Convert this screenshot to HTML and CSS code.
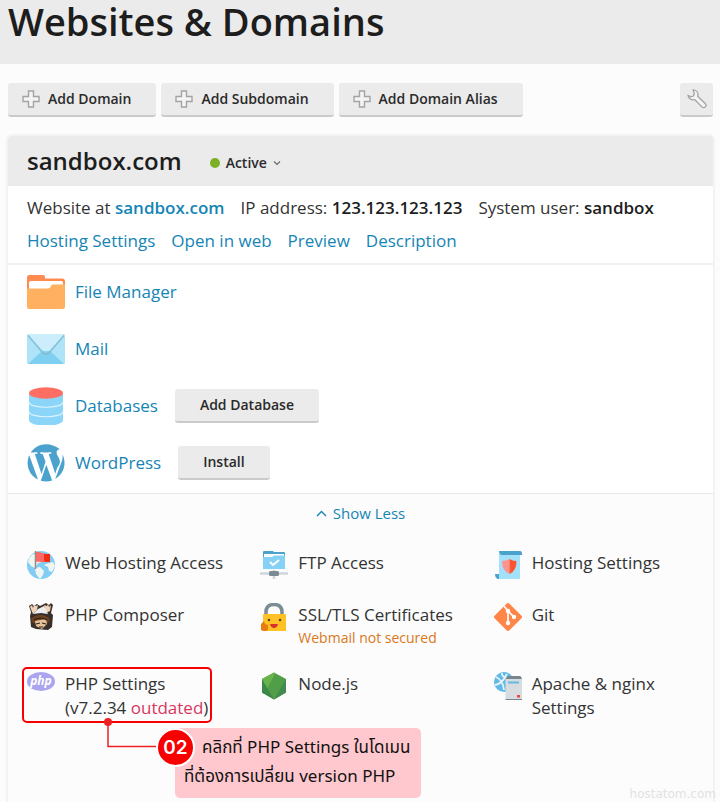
FILE: index.html
```html
<!DOCTYPE html>
<html lang="en">
<head>
<meta charset="utf-8">
<meta name="viewport" content="width=device-width, initial-scale=1">
<title>Websites &amp; Domains</title>
<link rel="stylesheet" href="styles.css">
</head>
<body>
<svg class="defs" aria-hidden="true">
  <symbol id="plus" viewBox="0 0 18 18"><path d="M6.5 1h5v5.500H17v5h-5.500V17h-5v-5.500H1v-5h5.500z" fill="#f4f4f4" stroke="#a3a3a3" stroke-width="1.400"/></symbol>
</svg>

<header class="page-head"><h1>Websites &amp; Domains</h1></header>

<main class="page">
  <div class="toolbar">
    <button class="btn btn-icon" type="button"><svg width="18" height="18" aria-hidden="true"><use href="#plus"/></svg>Add Domain</button>
    <button class="btn btn-icon" type="button"><svg width="18" height="18" aria-hidden="true"><use href="#plus"/></svg>Add Subdomain</button>
    <button class="btn btn-icon" type="button"><svg width="18" height="18" aria-hidden="true"><use href="#plus"/></svg>Add Domain Alias</button>
    <button class="btn btn-tool" type="button" aria-label="Settings"><svg width="20" height="20" viewBox="0 0 20 20" aria-hidden="true"><path d="M6 .8C8.800.800 11 2.800 11 5.500c0 .6-.1 1.200-.3 1.700l7.500 7.300c1 1 1 2.500.1 3.400-.9 1-2.500 1-3.400 0L7.600 10.500c-3 1-6-.8-6.700-4.300L3.800 7.800 6.500 7l.9-2.600z" fill="#f4f4f4" stroke="#a3a3a3" stroke-width="1.300" stroke-linejoin="round"/></svg></button>
  </div>

  <section class="panel">
    <div class="panel-head">
      <h2>sandbox.com</h2>
      <button class="status" type="button"><span class="dot"></span>Active<svg width="8" height="6" viewBox="0 0 8 6" aria-hidden="true"><path d="M1 1.500l3 3 3-3" fill="none" stroke="#666" stroke-width="1.100"/></svg></button>
    </div>

    <div class="summary">
      <div class="line">
        <span>Website at <a class="strong" href="#">sandbox.com</a></span>
        <span>IP address: <b>123.123.123.123</b></span>
        <span>System user: <b>sandbox</b></span>
      </div>
      <nav class="line">
        <a href="#">Hosting Settings</a>
        <a href="#">Open in web</a>
        <a href="#">Preview</a>
        <a href="#">Description</a>
      </nav>
    </div>

    <ul class="services">
      <li>
        <svg width="38" height="38" viewBox="0 0 38 38" aria-hidden="true"><path d="M0 4.500Q0 2 2 2h14q2 0 2 2v1.500h17q3 0 3 3V20H0z" fill="#ff8a50"/><path d="M2 9.500Q2 8 3.500 8h31Q36 8 36 9.500V18H2z" fill="#fff"/><path d="M0 15.500h21q2 0 2.700-2t2.300-2h12V34q0 2-2 2H2q-2 0-2-2z" fill="#ffb060"/></svg>
        <a href="#">File Manager</a>
      </li>
      <li>
        <svg width="38" height="38" viewBox="0 0 38 38" aria-hidden="true"><rect y="4" width="38" height="30" rx="1.500" fill="#aee3f8"/><path d="M1 34L15 21h8l14 13z" fill="#7fd0f0"/><path d="M1 4.500L15.500 21.500q3.500 3.500 7 0L37 4.500v2L22.500 23.500q-3.500 3-7 0L1 6.500z" fill="#82bcd0"/><path d="M1 4h36L22.500 20q-3.500 2.500-7 0z" fill="#cceefc"/></svg>
        <a href="#">Mail</a>
      </li>
      <li>
        <svg width="38" height="38" viewBox="0 0 38 38" aria-hidden="true"><path d="M2 6v27c0 7.500 34 7.500 34 0V6z" fill="#8bd5f8"/><path d="M2 15c0 7 34 7 34 0M2 24.500c0 7 34 7 34 0" fill="none" stroke="#dcf4fe" stroke-width="1.200"/><ellipse cx="19" cy="6" rx="17" ry="5.700" fill="#ff6e62"/></svg>
        <a href="#">Databases</a>
        <button class="btn" type="button">Add Database</button>
      </li>
      <li>
        <svg width="38" height="38" viewBox="0 0 122.500 122.500" fill="#4ba3cd" aria-hidden="true"><path d="M2 61.300c0 24 13.600 44 33.500 53.500L7.200 36.500C3.800 44 2 52.400 2 61.300zM106 58c0-7.300-2.600-12.400-4.900-16.300-3-4.900-5.800-9-5.800-13.900 0-5.400 4.100-10.500 9.900-10.500h1C94.500 7.500 78.600 1 61.300 1 41 1 22.500 12 12 27.500h3.800c6.200 0 15.800-.8 15.800-.8 3.200-.2 3.600 4.500.4 4.900 0 0-3.200.4-6.800.6l21.600 64.200 13-38.900-9.200-25.300c-3.200-.2-6.300-.6-6.300-.6-3.200-.2-2.800-5.100.4-4.900 0 0 9.800.8 15.700.8 6.200 0 15.800-.8 15.800-.8 3.200-.2 3.600 4.500.4 4.900 0 0-3.200.4-6.800.6l21.400 63.700 6.100-19.700C103.600 68.900 106 63.400 106 58zM62.300 66.500L44.500 118.200c5.300 1.600 11 2.500 16.800 2.500 6.900 0 13.600-1.200 19.800-3.400zM114.500 33c.2 1.900.4 3.900.4 6.100 0 6-1.100 12.800-4.500 21.200L91 112.500c18-10.500 30-29.500 30-51.200 0-10.300-2.400-20-6.500-28.300z"/></svg>
        <a href="#">WordPress</a>
        <button class="btn" type="button">Install</button>
      </li>
    </ul>

    <div class="more">
      <button class="toggle" type="button"><svg width="11" height="7" viewBox="0 0 11 7" aria-hidden="true"><path d="M1 6l4.500-4.500L10 6" fill="none" stroke="#1585b5" stroke-width="1.400"/></svg>Show Less</button>

      <ul class="tools">
        <li>
          <svg width="28" height="28" viewBox="0 0 28 28" aria-hidden="true"><circle cx="14" cy="14" r="14" fill="#82cdf3"/><path d="M2 7l4-4 7 1 3 7-5 1-3 5-4-2-3-4zM8 17l5-1 4 4-1 4-3 4-4-5zM19 13l7-2 2 4-3 6-3-1-1-4-4-2z" fill="#f0f5f2"/><path d="M9 1c4-1 5 2 9 1v9c-4 1-5-1-9 0z" fill="#ff6868"/><path d="M17 3h6v8h-5l-1-2z" fill="#f52a12"/><path d="M8.500 0v18" stroke="#9b8880" stroke-width="1.500"/></svg>
          <span>Web Hosting Access</span>
        </li>
        <li>
          <svg width="28" height="28" viewBox="0 0 28 28" aria-hidden="true"><path d="M3 1q0-1 1-1h9l1 1h10q1 0 1 1v10H3z" fill="#4ba3cd"/><path d="M4 3h20v4H4z" fill="#fff"/><path d="M3 6h9l2-1.500h11V18H3z" fill="#86d2f7"/><path d="M10 11l3 3 6-5" fill="none" stroke="#fff" stroke-width="2"/><path d="M0 22.500h28M14 19v9" stroke="#ced6da" stroke-width="2.500"/><rect x="9" y="20" width="10" height="5" rx="1.500" fill="#7b8b93"/></svg>
          <span>FTP Access</span>
        </li>
        <li>
          <svg width="28" height="28" viewBox="0 0 28 28" aria-hidden="true"><path d="M5 3h21v25H3q2-1 2-4z" fill="#a3e1fa"/><path d="M5 0h21q2 0 2 2v2H8Q5 4 5 0zM1 23h4v5q-4 0-4-5z" fill="#4ba3cd"/><path d="M8 10q4 0 7.500-2v15Q8 20 8 10z" fill="#ff938c"/><path d="M15.500 8q3 2 7 2 0 10-7 13z" fill="#fc5530"/></svg>
          <span>Hosting Settings</span>
        </li>
        <li>
          <svg width="28" height="28" viewBox="0 0 28 28" aria-hidden="true"><path d="M4 9L2 3l3-2 2 2 3-2 3 2 6-3 3 2 2-2 2 2-2 8 2 2-1 12-4 3-12-1-5-2-1-11z" fill="#39302c"/><path d="M3 4l2-2 1 3 1-3 2 1 2-1-1 5-4 4zM17 2l3 1 1-2 1 3 2-2-1 6-4 2z" fill="#efd3b4"/><path d="M6 11l5-5 6-3 4 8-7-1z" fill="#eeeef0"/><path d="M4 16q9-8 19 0l-2 4H6z" fill="#70431f"/><path d="M8 18l11-2 1 5-5 5-6-3z" fill="#e6c29a"/><path d="M7 17q6-4 13 0M9 21l4-1M15 20l4 1M12 24h4" fill="none" stroke="#29221f" stroke-width="1.200"/></svg>
          <span>PHP Composer</span>
        </li>
        <li>
          <svg width="28" height="28" viewBox="0 0 28 28" aria-hidden="true"><path d="M6 13V9q0-7.500 8-7.500T22 9v4" fill="none" stroke="#7c8c95" stroke-width="3.500"/><rect x="3" y="11" width="23" height="17.500" rx="1" fill="#ffc124"/><path d="M10 21h8q-1 4-4 4t-4-4z" fill="#d8312b"/><circle cx="9" cy="17" r="1.300" fill="#584329"/><circle cx="20" cy="17" r="1.300" fill="#584329"/><path d="M1 21l3-3 1 3 3 1v5q-4 2-7 0z" fill="#e67c10"/></svg>
          <span>SSL/TLS Certificates<small>Webmail not secured</small></span>
        </li>
        <li>
          <svg width="28" height="28" viewBox="0 0 28 28" aria-hidden="true"><path d="M12.500.700q1.500-1.400 3 0l12 12q1.200 1.300 0 2.600l-12 12q-1.500 1.400-3 0l-12-12q-1.200-1.300 0-2.600z" fill="#ff8648"/><path d="M10 3l4 5v13M14 8l7 7" fill="none" stroke="#fff" stroke-width="1.700"/><circle cx="14" cy="8" r="2.200" fill="#fff"/><circle cx="14" cy="20" r="2.200" fill="#fff"/><circle cx="20" cy="14" r="2.200" fill="#fff"/></svg>
          <span>Git</span>
        </li>
        <li class="marked">
          <svg width="28" height="20" viewBox="0 0 28 20" aria-hidden="true"><ellipse cx="14" cy="9.500" rx="14" ry="9.500" fill="#aaa5ee"/><text x="14" y="13" text-anchor="middle" class="php">php</text></svg>
          <span>PHP Settings<br>(v7.2.34 <em>outdated</em>)</span>
          <div class="frame"></div>
          <svg class="leader" width="52" height="32" viewBox="0 0 52 32" aria-hidden="true"><path d="M4 4v24.500h48" fill="none" stroke="#ed2024" stroke-width="1.500"/><circle cx="4" cy="4" r="4" fill="#ed2024"/></svg>
          <div class="note" lang="th"><b class="step">02</b><p>คลิกที่ PHP Settings ในโดเมน</p><p>ที่ต้องการเปลี่ยน version PHP</p></div>
        </li>
        <li>
          <svg width="28" height="28" viewBox="0 0 28 28" aria-hidden="true"><path d="M14 .5L26 7v13.500L14 27.500 2 20.500V7z" fill="#509f48"/><path d="M14 .5L2 7v13.500L4 22 15 2z" fill="#69b34d"/><path d="M2 7l12 20.500L2 20.500z" fill="#3d8848"/><path d="M26 7L14 27.500l12-7z" fill="#438a50"/></svg>
          <span>Node.js</span>
        </li>
        <li>
          <svg width="28" height="28" viewBox="0 0 28 28" aria-hidden="true"><circle cx="10" cy="10" r="10" fill="#61b9e5"/><path d="M2 5q7 3 8 13M8 1q-1 5 10 6M1 13q7-1 12-11" fill="none" stroke="#e6f5fb" stroke-width="1.800"/><rect x="11.500" y="5" width="16.500" height="23" rx="1" fill="#d6dce0"/><path d="M11.500 7l2-3h13l1.500 3zM11.500 27h16.500v1.500H11.500z" fill="#77868f"/><path d="M14 10.500h11" stroke="#64b9e3" stroke-width="2"/><rect x="23" y="23" width="3" height="2.500" fill="#f14632"/></svg>
          <span>Apache &amp; nginx Settings</span>
        </li>
      </ul>
      <footer class="mark">hostatom.com</footer>
    </div>
  </section>
</main>
</body>
</html>
```
FILE: styles.css
```css
* { box-sizing: border-box; }

body {
  margin: 0;
  min-height: 100vh;
  display: flex;
  flex-direction: column;
  background: #fcfcfc;
  color: #333;
  font: 17px/24px "Open Sans", "Noto Sans", sans-serif;
}

h1, h2, p, ul { margin: 0; padding: 0; }
ul { list-style: none; }
svg { flex: none; display: block; }
.defs { position: absolute; width: 0; height: 0; }

a { color: #1585b5; text-decoration: none; }
button { font-family: inherit; cursor: pointer; }
b, .strong { font-weight: 600; }
b { color: #1d1d1d; }

.page-head { background: #ebebeb; padding: 0 8px 22px; }
h1 { font-size: 38px; line-height: 42px; font-weight: 600; color: #1d1d1d; }

.page {
  flex: 1;
  display: flex;
  flex-direction: column;
  gap: 19px;
  padding: 19px 7px 0 8px;
}

.toolbar { display: flex; gap: 5px; }

.btn {
  height: 34px;
  padding: 0 25px;
  border: 0;
  border-bottom: 2px solid #cbcbcb;
  border-radius: 3px;
  background: #ebebeb;
  color: #2a2a2a;
  font-size: 14px;
  line-height: 20px;
  font-weight: 600;
}
.btn-icon { display: flex; align-items: center; gap: 8px; padding-left: 14px; }
.btn-tool { display: grid; place-items: center; width: 33px; padding: 0; margin-left: auto; }

.panel {
  flex: 1;
  display: flex;
  flex-direction: column;
  border-radius: 4px 4px 0 0;
  background: #fff;
  box-shadow: 0 0 0 2px #f3f3f3;
}

.panel-head {
  display: flex;
  align-items: center;
  gap: 28px;
  height: 50px;
  padding: 0 19px;
  border-radius: 4px 4px 0 0;
  background: #ebebeb;
}
h2 { font-size: 24px; line-height: 32px; font-weight: 600; color: #1d1d1d; }

.status {
  display: flex;
  align-items: center;
  gap: 6px;
  padding: 4px 0 0;
  border: 0;
  background: none;
  color: #2a2a2a;
  font-size: 14px;
  line-height: 20px;
  font-weight: 600;
}
.dot { width: 10px; height: 10px; border-radius: 50%; background: #7bb026; }

.summary {
  display: grid;
  gap: 9px;
  padding: 10px 19px;
  border-bottom: 2px solid #f1f1f1;
}
.line { display: flex; flex-wrap: wrap; column-gap: 16px; }

.services { display: grid; gap: 19px; padding: 8px 19px 11px; }
.services li { display: flex; align-items: center; }
.services a { margin: 0 17px 0 10px; }

.more {
  flex: 1;
  display: flex;
  flex-direction: column;
  padding: 9px 0 0 19px;
  border-top: 1px solid #e9e9e9;
  background: #fcfcfc;
}

.toggle {
  display: flex;
  align-items: center;
  align-self: center;
  gap: 6px;
  margin-right: 19px;
  padding: 0;
  border: 0;
  background: none;
  color: #1585b5;
  font-size: 15px;
  line-height: 20px;
}

.tools {
  display: grid;
  grid-template-columns: repeat(3, 1fr);
  gap: 23px 14px;
  margin: 28px 0 0;
}
.tools li { position: relative; display: flex; gap: 10px; padding-right: 16px; }
.tools span { min-width: 0; }
.tools svg { margin-bottom: 1px; }
small { display: block; color: #d97720; font-size: 14px; line-height: 22px; }
em { color: #d9365e; font-style: normal; }
.php { fill: #fff; font: italic 700 12px "Open Sans", sans-serif; }

/* Annotation over the PHP Settings entry */
.frame {
  position: absolute;
  top: -5px;
  left: -5px;
  width: 190px;
  height: 56px;
  border: 2px solid #f80000;
  border-radius: 5px;
}
.tools .leader { position: absolute; top: 46px; left: 77px; }
.note {
  position: absolute;
  top: 56px;
  left: 148px;
  width: 246px;
  padding: 6px 9px;
  border-radius: 5px;
  background: #ffc8ce;
  color: #111;
  font: 17px/29px "Noto Sans Thai", "Loma", "Liberation Sans", sans-serif;
  white-space: nowrap;
}
.note p:first-of-type { padding-left: 18px; }
.step {
  position: absolute;
  top: 0;
  left: -19px;
  width: 39px;
  height: 39px;
  border: 2px solid #fff;
  border-radius: 50%;
  background: #f80000;
  color: #fff;
  font: 600 19px/35px Inter, sans-serif;
  text-align: center;
}

.mark {
  align-self: flex-end;
  margin-top: auto;
  margin-right: -3px;
  color: #e2e2e2;
  font: 12px/16px "DejaVu Sans", sans-serif;
}
```
